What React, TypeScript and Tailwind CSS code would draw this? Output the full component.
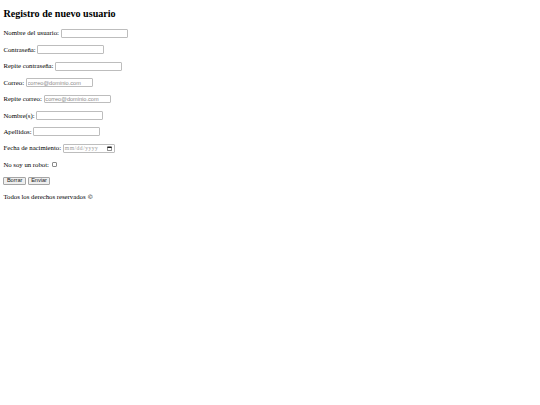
import { useState } from "react"

const field =
  "w-[67px] h-[8.9px] px-[0.85px] py-[0.4px] border-[0.85px] border-[#bdbdbd] rounded-[1px] bg-white text-[5.6px] text-black placeholder:text-[#8a8a8a] [font-family:'Liberation_Sans',Arial,sans-serif] outline-none"

const btn =
  "h-[8.6px] px-[2.5px] border-[0.85px] border-[#a5a5a5] rounded-[1px] bg-[#efefef] text-[5.6px] leading-none text-[#222] [font-family:'Liberation_Sans',Arial,sans-serif]"

const Row = ({ children }: { children: React.ReactNode }) => (
  <div className="my-[6.75px] flex h-[9.7px] items-center gap-[1.7px] text-[6.75px] leading-[1.15]">
    {children}
  </div>
)

export default function App() {
  const [robot, setRobot] = useState(false)

  return (
    <div className="min-h-[405px] bg-white px-[3.4px] pt-[8.4px] text-black [font-family:'Liberation_Serif','Times_New_Roman',serif]">
      <h2 className="mb-[8.4px] text-[10.1px] font-bold leading-[1.15]">
        Registro de nuevo usuario
      </h2>

      <form onSubmit={(e) => e.preventDefault()}>
        <Row>
          <span>Nombre del usuario:</span>
          <input type="text" className={field} />
        </Row>
        <Row>
          <span>Contraseña:</span>
          <input type="password" className={field} />
        </Row>
        <Row>
          <span>Repite contraseña:</span>
          <input type="password" className={field} />
        </Row>
        <Row>
          <span>Correo:</span>
          <input type="email" placeholder="correo@dominio.com" className={field} />
        </Row>
        <Row>
          <span>Repite correo:</span>
          <input type="email" placeholder="correo@dominio.com" className={field} />
        </Row>
        <Row>
          <span>Nombre(s):</span>
          <input type="text" className={field} />
        </Row>
        <Row>
          <span>Apellidos:</span>
          <input type="text" className={field} />
        </Row>
        <Row>
          <span>Fecha de nacimiento:</span>
          {/* date field */}
          <span className="flex h-[8.9px] w-[52px] items-center justify-between border-[0.85px] border-[#bdbdbd] rounded-[1px] bg-white pl-[1px] pr-[1.6px]">
            <span className="text-[5.6px] tracking-[0.5px] text-[#9a9a9a] [font-family:'Liberation_Serif',serif]">
              mm/dd/yyyy
            </span>
            <svg width="5" height="5" viewBox="0 0 10 10" fill="none">
              <rect x="0.8" y="1.6" width="8.4" height="7.6" rx="0.6" stroke="#222" strokeWidth="1.1" />
              <rect x="0.8" y="1.6" width="8.4" height="2.4" fill="#222" />
            </svg>
          </span>
        </Row>
        <Row>
          <span>No soy un robot:</span>
          <input
            type="checkbox"
            checked={robot}
            onChange={(e) => setRobot(e.target.checked)}
            className="ml-[1px] h-[5.4px] w-[5.4px] appearance-none rounded-[1px] border-[0.6px] border-[#8a8a8a] bg-white checked:bg-[#0075ff]"
          />
        </Row>
        <Row>
          <button type="reset" className={btn}>Borrar</button>
          <button type="submit" className={btn}>Enviar</button>
        </Row>
      </form>

      <p className="mt-[4px] text-[6.75px] leading-[1.15]">
        Todos los derechos reservados{" "}
        <span className="[font-family:'DejaVu_Serif',serif] [font-variant-emoji:text] text-[6px]">&copy;</span>
      </p>
    </div>
  )
}
